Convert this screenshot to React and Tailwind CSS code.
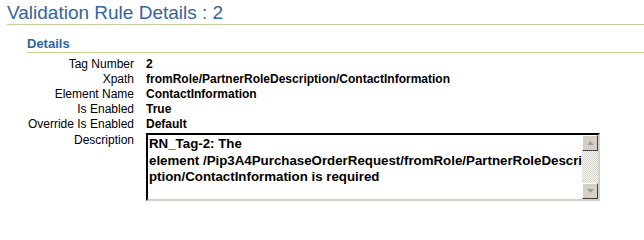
export default function App() {
  const rows = [
    ['Tag Number', '2'],
    ['Xpath', 'fromRole/PartnerRoleDescription/ContactInformation'],
    ['Element Name', 'ContactInformation'],
    ['Is Enabled', 'True'],
    ['Override Is Enabled', 'Default'],
  ];

  return (
    <div className="w-full h-[219px] bg-white text-black overflow-hidden" style={{ fontFamily: '"Liberation Sans", Arial, sans-serif' }}>
      {/* page title */}
      <div className="ml-[7px] pt-[2px] border-b border-[#cccc99]">
        <h1 className="text-[19px] leading-[22px] text-[#336699]">Validation Rule Details : 2</h1>
      </div>

      {/* section header */}
      <div className="ml-[27px] mt-[11px] border-b border-[#cccc99]">
        <h2 className="text-[13px] leading-[16px] font-bold text-[#336699]">Details</h2>
      </div>

      <div className="pt-[4px] grid grid-cols-[134px_1fr] gap-x-[12px] text-[12px] leading-[15px]">
        {rows.map(([label, value]) => (
          <div key={label} className="contents">
            <div className="text-right">{label}</div>
            <div className="font-bold">{value}</div>
          </div>
        ))}
        <div className="text-right pt-[1px]">Description</div>
        <div className="pt-[1px]">
          {/* read-only textarea look */}
          <div className="w-[454px] h-[68px] flex border-2 border-t-black border-l-black border-r-[#d4d0c8] border-b-[#d4d0c8]">
            <div className="flex-1 pl-[1px] pt-[1px] text-[13.3px] leading-[16.5px] font-bold overflow-hidden whitespace-nowrap">
              RN_Tag-2: The<br />
              element /Pip3A4PurchaseOrderRequest/fromRole/PartnerRoleDescri<br />
              ption/ContactInformation is required
            </div>
            <div className="w-[16px] flex flex-col">
              <div className="h-[16px] bg-[#d4d0c8] border border-t-white border-l-white border-r-[#404040] border-b-[#404040] flex items-center justify-center">
                <svg width="7" height="4" viewBox="0 0 7 4"><path d="M3.5 0 L7 4 L0 4 Z" fill="#a0a0a0" /></svg>
              </div>
              <div className="flex-1 bg-[repeating-conic-gradient(#d4d0c8_0_25%,#ffffff_0_50%)] bg-[length:2px_2px]" />
              <div className="h-[16px] bg-[#d4d0c8] border border-t-white border-l-white border-r-[#404040] border-b-[#404040] flex items-center justify-center">
                <svg width="7" height="4" viewBox="0 0 7 4"><path d="M0 0 L7 0 L3.5 4 Z" fill="#a0a0a0" /></svg>
              </div>
            </div>
          </div>
        </div>
      </div>
    </div>
  );
}
